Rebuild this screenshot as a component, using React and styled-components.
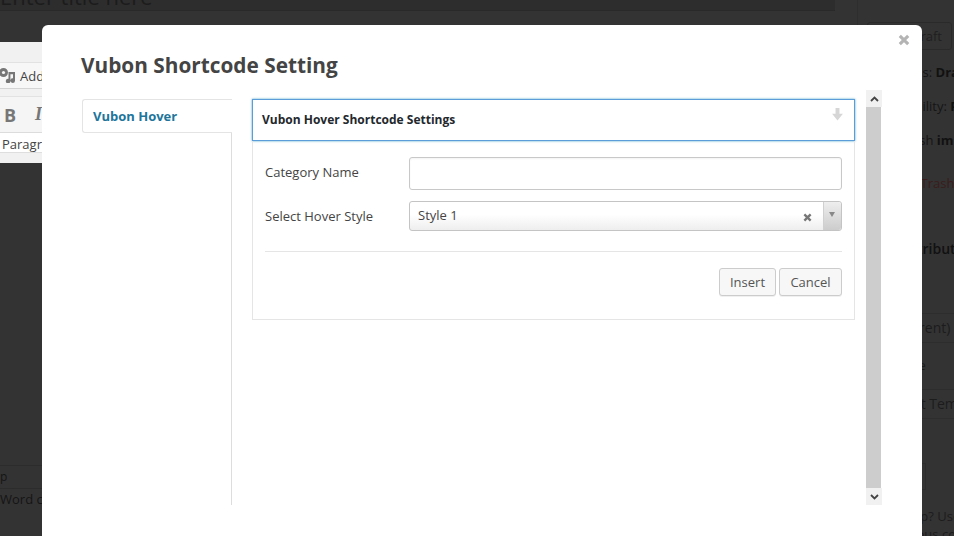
import React from "react";
import styled, { createGlobalStyle } from "styled-components";

const GlobalStyle = createGlobalStyle`
  html, body {
    margin: 0;
    height: 100%;
    overflow: hidden;
    background: #333;
  }
  body, button, input {
    font-family: "Open Sans", "Noto Sans", sans-serif;
  }
  * {
    box-sizing: border-box;
  }
`;

const ArrowDown = () => (
  <svg width="13" height="13" viewBox="0 0 12 12">
    <path d="M4.2 0h3.6v5.4h3.2L6 11.5 1 5.4h3.2z" fill="#d6d6d6" />
  </svg>
);

const Cross = ({ size, color }) => (
  <svg width={size} height={size} viewBox="0 0 10 10">
    <path d="M1.5 1.5l7 7M8.5 1.5l-7 7" stroke={color} strokeWidth="2.6" fill="none" />
  </svg>
);

const Chevron = ({ up }) => (
  <svg width="9" height="6" viewBox="0 0 9 6">
    <path
      d={up ? "M1 5l3.5-3.5L8 5" : "M1 1l3.5 3.5L8 1"}
      stroke="#444"
      strokeWidth="1.8"
      fill="none"
    />
  </svg>
);

const App = () => {
  return (
    <Page>
      <GlobalStyle />
      <EditorColumn>
        <TitleField>Enter title here</TitleField>
        <Toolbar>
          <MediaRow>
            <MediaIcon viewBox="0 0 16 15">
              <circle cx="3.5" cy="4.5" r="4.5" fill="#777" />
              <circle cx="3.5" cy="4.5" r="1.6" fill="#f7f7f7" />
              <path d="M8.5 4H15v8.5a2.3 2.3 0 1 1-2-2.2V6.2h-2.6v7a2.3 2.3 0 1 1-1.9-2.4z" fill="#777" />
            </MediaIcon>
            <span>Add Media</span>
          </MediaRow>
          <FormatRow>
            <Bold>B</Bold>
            <Italic>I</Italic>
          </FormatRow>
          <ParagraphRow>Paragraph</ParagraphRow>
        </Toolbar>
        <EditorSpacer />
        <PathRow>p</PathRow>
        <WordRow>Word count: 0</WordRow>
      </EditorColumn>

      <Sidebar>
        <SaveDraft>Save Draft</SaveDraft>
        <MetaRow $top={13} $indent={33}>Status: <b>Draft</b></MetaRow>
        <MetaRow $top={16} $indent={36}>Visibility: <b>Public</b></MetaRow>
        <MetaRow $top={16} $indent={31}>Publish <b>immediately</b></MetaRow>
        <TrashRow>Move to Trash</TrashRow>
        <AttributesTitle>Page Attributes</AttributesTitle>
        <SelectRow $top={55}>(no parent)</SelectRow>
        <PlainRow>Template</PlainRow>
        <SelectRow $top={15}>Default Template</SelectRow>
        <OrderBox />
        <HelpText>
          Need help? Use
          <br />
          Anonymous content
        </HelpText>
      </Sidebar>

      <Modal>
        <CloseButton aria-label="Close">
          <Cross size={12} color="#b4b4b4" />
        </CloseButton>
        <ModalTitle>Vubon Shortcode Setting</ModalTitle>
        <ModalBody>
          <TabColumn>
            <Tab>Vubon Hover</Tab>
            <TabRest />
          </TabColumn>
          <ScrollArea>
            <Content>
              <PanelHeader>
                <PanelTitle>Vubon Hover Shortcode Settings</PanelTitle>
                <PanelArrow>
                  <ArrowDown />
                </PanelArrow>
              </PanelHeader>
              <PanelBody>
                <FieldRow>
                  <FieldLabel $nudge={-4}>Category Name</FieldLabel>
                  <TextInput type="text" />
                </FieldRow>
                <FieldRow $top={11}>
                  <FieldLabel>Select Hover Style</FieldLabel>
                  <SelectBox>
                    <SelectValue>Style 1</SelectValue>
                    <SelectClear>
                      <Cross size={9} color="#777" />
                    </SelectClear>
                    <SelectCaret />
                  </SelectBox>
                </FieldRow>
                <Divider />
                <Actions>
                  <ActionButton $width={57}>Insert</ActionButton>
                  <ActionButton $width={63}>Cancel</ActionButton>
                </Actions>
              </PanelBody>
            </Content>
            <Scrollbar>
              <ScrollButton>
                <Chevron up />
              </ScrollButton>
              <ScrollThumb />
              <ScrollButton>
                <Chevron />
              </ScrollButton>
            </Scrollbar>
          </ScrollArea>
        </ModalBody>
      </Modal>
    </Page>
  );
};

const Page = styled.div`
  position: relative;
  display: flex;
  width: 954px;
  height: 536px;
  overflow: hidden;
  background: #333;
  color: #151515;
`;

const EditorColumn = styled.div`
  display: flex;
  flex-direction: column;
  width: 857px;
  height: 536px;
  white-space: nowrap;
`;

const TitleField = styled.div`
  width: 835px;
  height: 30px;
  margin-top: -19px;
  flex: none;
  font-size: 22px;
  line-height: 30px;
  color: #1c1c1c;
  background: #2d2d2d;
  border-bottom: 1px solid #292929;
`;

const Toolbar = styled.div`
  display: flex;
  flex-direction: column;
  margin-top: 31px;
  height: 121px;
  padding-top: 20px;
  flex: none;
  background: #f1f1f1;
  color: #444;
`;

const MediaRow = styled.div`
  display: flex;
  align-items: center;
  gap: 4px;
  height: 27px;
  flex: none;
  font-size: 13px;
  border-top: 1px solid #e2e2e2;
  border-bottom: 1px solid #d4d4d4;
  background: #f7f7f7;
`;

const MediaIcon = styled.svg`
  width: 16px;
  height: 15px;
  flex: none;
`;

const FormatRow = styled.div`
  display: flex;
  align-items: center;
  height: 37px;
  flex: none;
  margin-top: 7px;
  padding-left: 4px;
  gap: 19px;
  border-top: 1px solid #e2e2e2;
  border-bottom: 1px solid #dcdcdc;
  background: #f5f5f5;
  color: #777;
`;

const Bold = styled.b`
  font-size: 18px;
`;

const Italic = styled.i`
  font-size: 18px;
  font-weight: 700;
  font-family: "Liberation Serif", serif;
`;

const ParagraphRow = styled.div`
  height: 20px;
  flex: none;
  padding-left: 2px;
  font-size: 13px;
  line-height: 23px;
  border-bottom: 1px solid #dedede;
  background: #fff;
`;

const EditorSpacer = styled.div`
  flex: 1;
`;

const PathRow = styled.div`
  height: 24px;
  flex: none;
  font-size: 12px;
  line-height: 22px;
  border-top: 1px solid #2c2c2c;
  border-bottom: 1px solid #2c2c2c;
`;

const WordRow = styled.div`
  height: 47px;
  flex: none;
  font-size: 13px;
  line-height: 20px;
`;

const Sidebar = styled.div`
  width: 97px;
  flex: none;
  display: flex;
  flex-direction: column;
  align-items: flex-start;
  background: #333;
  border-left: 1px solid #2e2e2e;
  font-size: 13px;
  line-height: 18px;
  white-space: nowrap;
`;

const SaveDraft = styled.div`
  margin: 22px 0 0 9px;
  width: 85px;
  height: 28px;
  flex: none;
  text-align: right;
  padding-right: 9px;
  line-height: 26px;
  color: #1f1f1f;
  border: 1px solid #2a2a2a;
  border-radius: 3px;
`;

const MetaRow = styled.div`
  margin-top: ${(p) => p.$top}px;
  padding-left: ${(p) => p.$indent}px;
  b {
    color: #111;
  }
`;

const TrashRow = styled.div`
  margin-top: 25px;
  padding-left: 10px;
  color: #3a1c1c;
`;

const AttributesTitle = styled.div`
  margin-top: 48px;
  padding-left: 8px;
  font-size: 14px;
  font-weight: 600;
  color: #111;
`;

const SelectRow = styled.div`
  margin-top: ${(p) => p.$top}px;
  padding: 5px 0 5px 20px;
  width: 100%;
  font-size: 14px;
  color: #1c1c1c;
  border-top: 1px solid #2d2d2d;
  border-bottom: 1px solid #2d2d2d;
`;

const PlainRow = styled.div`
  margin-top: 13px;
  padding-left: 11px;
  color: #1c1c1c;
`;

const OrderBox = styled.div`
  margin: 44px 0 0 20px;
  width: 48px;
  height: 27px;
  flex: none;
  border: 1px solid #2d2d2d;
`;

const HelpText = styled.div`
  margin-top: 17px;
  padding-left: 8px;
  color: #1c1c1c;
  line-height: 18px;
`;

const Modal = styled.div`
  position: absolute;
  left: 42px;
  top: 25px;
  width: 880px;
  height: 540px;
  padding: 26px 40px 0 40px;
  background: #fff;
  border-radius: 6px;
  color: #444;
`;

const CloseButton = styled.div`
  position: absolute;
  top: 9px;
  right: 12px;
  line-height: 0;
`;

const ModalTitle = styled.h1`
  margin: 0 0 0 -1px;
  font-size: 20.8px;
  line-height: 28px;
  font-weight: 700;
  color: #444;
`;

const ModalBody = styled.div`
  display: flex;
  margin-top: 11px;
  height: 415px;
`;

const TabColumn = styled.div`
  display: flex;
  flex-direction: column;
  width: 150px;
  flex: none;
`;

const Tab = styled.div`
  margin-top: 9px;
  height: 34px;
  flex: none;
  padding-left: 10px;
  font-size: 13px;
  font-weight: 700;
  line-height: 32px;
  color: #21759b;
  border: 1px solid #e4e4e4;
  border-right: none;
  border-radius: 3px 0 0 3px;
`;

const TabRest = styled.div`
  flex: 1;
  border-right: 1px solid #ddd;
`;

const ScrollArea = styled.div`
  display: flex;
  margin-left: 20px;
  width: 630px;
  height: 415px;
  flex: none;
`;

const Content = styled.div`
  width: 603px;
  margin-top: 9px;
  flex: none;
`;

const PanelHeader = styled.div`
  display: flex;
  align-items: center;
  justify-content: space-between;
  height: 42px;
  padding: 0 10px 2px 9px;
  border: 1px solid #5b9dd9;
  box-shadow: 0 0 2px rgba(30, 140, 190, 0.8);
`;

const PanelTitle = styled.div`
  font-size: 12px;
  font-weight: 700;
  color: #23282d;
`;

const PanelArrow = styled.div`
  line-height: 0;
  margin-top: -10px;
`;

const PanelBody = styled.div`
  height: 179px;
  padding: 16px 12px 0 12px;
  border: 1px solid #e5e5e5;
  border-top: none;
`;

const FieldRow = styled.div`
  display: flex;
  align-items: center;
  margin-top: ${(p) => p.$top || 0}px;
`;

const FieldLabel = styled.label`
  width: 144px;
  flex: none;
  margin-top: ${(p) => p.$nudge || 0}px;
  font-size: 13px;
  color: #444;
`;

const TextInput = styled.input`
  width: 433px;
  height: 33px;
  flex: none;
  border: 1px solid #c8c8c8;
  border-radius: 3px;
  background: #fff;
  box-shadow: inset 0 1px 2px rgba(0, 0, 0, 0.05);
`;

const SelectBox = styled.div`
  display: flex;
  align-items: center;
  width: 433px;
  height: 30px;
  flex: none;
  border: 1px solid #c4c4c4;
  border-radius: 3px;
  background: linear-gradient(#fff, #fff 45%, #eee);
`;

const SelectValue = styled.div`
  flex: 1;
  padding-left: 8px;
  margin-top: -2px;
  font-size: 13px;
  color: #444;
`;

const SelectClear = styled.div`
  line-height: 0;
  margin-right: 11px;
  margin-top: 2px;
`;

const SelectCaret = styled.div`
  position: relative;
  width: 18px;
  height: 100%;
  border-left: 1px solid #d0d0d0;
  border-radius: 0 3px 3px 0;
  background: linear-gradient(#eee, #ccc);
  &::after {
    content: "";
    position: absolute;
    left: 5px;
    top: 10px;
    border-left: 3.5px solid transparent;
    border-right: 3.5px solid transparent;
    border-top: 5px solid #888;
  }
`;

const Divider = styled.div`
  margin-top: 20px;
  height: 1px;
  background: #e5e5e5;
`;

const Actions = styled.div`
  display: flex;
  justify-content: flex-end;
  gap: 3px;
  margin-top: 16px;
`;

const ActionButton = styled.button`
  width: ${(p) => p.$width}px;
  height: 28px;
  padding: 0;
  font-size: 13px;
  color: #555;
  background: #f7f7f7;
  border: 1px solid #ccc;
  border-radius: 3px;
  box-shadow: 0 1px 0 rgba(0, 0, 0, 0.06);
`;

const Scrollbar = styled.div`
  display: flex;
  flex-direction: column;
  width: 16px;
  margin-left: 11px;
  flex: none;
`;

const ScrollButton = styled.div`
  display: flex;
  align-items: center;
  justify-content: center;
  height: 17px;
  flex: none;
  background: #f1f1f1;
`;

const ScrollThumb = styled.div`
  flex: 1;
  width: 15px;
  background: #cdcdcd;
`;

export default App;
